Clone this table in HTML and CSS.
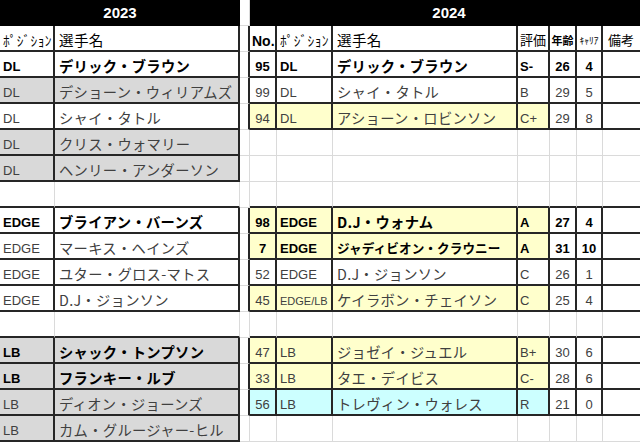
FILE: index.html
```html
<!DOCTYPE html>
<html lang="ja">
<head>
<meta charset="utf-8">
<title>2023 / 2024</title>
<link rel="stylesheet" href="styles.css">
</head>
<body>
<div class="sheet">
  <!-- row 1 -->
  <div class="c title span2">2023</div>
  <div class="c"></div>
  <div class="c title span7">2024</div>
  <!-- row 2 -->
  <div class="c r b hk pos">ﾎﾟｼﾞｼｮﾝ</div>
  <div class="c r b jp hd name">選手名</div>
  <div class="c r"></div>
  <div class="c r b lat bold no">No.</div>
  <div class="c r b hk pos">ﾎﾟｼﾞｼｮﾝ</div>
  <div class="c r b jp hd name">選手名</div>
  <div class="c r b jp hd sm grade">評価</div>
  <div class="c r b jp hd xs bold ctr">年齢</div>
  <div class="c r b hk xxs ctr">ｷｬﾘｱ</div>
  <div class="c r b jp hd sm memo">備考</div>
  <!-- row 3 -->
  <div class="c r b lat bold pos">DL</div>
  <div class="c r b jp bold name">デリック・ブラウン</div>
  <div class="c r"></div>
  <div class="c r b lat bold ctr">95</div>
  <div class="c r b lat bold pos">DL</div>
  <div class="c r b jp bold name">デリック・ブラウン</div>
  <div class="c r b lat bold grade">S-</div>
  <div class="c r b lat bold ctr">26</div>
  <div class="c r b lat bold ctr">4</div>
  <div class="c r b"></div>
  <!-- row 4 -->
  <div class="c r b lat pos gr">DL</div>
  <div class="c r b jp name gr">デショーン・ウィリアムズ</div>
  <div class="c r"></div>
  <div class="c r b lat ctr">99</div>
  <div class="c r b lat pos">DL</div>
  <div class="c r b jp name">シャイ・タトル</div>
  <div class="c r b lat grade">B</div>
  <div class="c r b lat ctr">29</div>
  <div class="c r b lat ctr">5</div>
  <div class="c r b"></div>
  <!-- row 5 -->
  <div class="c r b lat pos">DL</div>
  <div class="c r b jp name">シャイ・タトル</div>
  <div class="c r"></div>
  <div class="c r b lat ctr ye">94</div>
  <div class="c r b lat pos ye">DL</div>
  <div class="c r b jp name ye">アショーン・ロビンソン</div>
  <div class="c r b lat grade ye">C+</div>
  <div class="c r b lat ctr">29</div>
  <div class="c r b lat ctr">8</div>
  <div class="c r b"></div>
  <!-- row 6 -->
  <div class="c r b lat pos gr">DL</div>
  <div class="c r b jp name gr">クリス・ウォマリー</div>
  <div class="c"></div>
  <div class="c"></div><div class="c"></div><div class="c"></div><div class="c"></div><div class="c"></div><div class="c"></div><div class="c"></div>
  <!-- row 7 -->
  <div class="c r b lat pos gr">DL</div>
  <div class="c r b jp name gr">ヘンリー・アンダーソン</div>
  <div class="c"></div>
  <div class="c"></div><div class="c"></div><div class="c"></div><div class="c"></div><div class="c"></div><div class="c"></div><div class="c"></div>
  <!-- row 8 -->
  <div class="c b"></div>
  <div class="c b"></div>
  <div class="c"></div>
  <div class="c b"></div><div class="c b"></div><div class="c b"></div><div class="c b"></div><div class="c b"></div><div class="c b"></div><div class="c b"></div>
  <!-- row 9 -->
  <div class="c r b lat bold pos">EDGE</div>
  <div class="c r b jp bold name">ブライアン・バーンズ</div>
  <div class="c r"></div>
  <div class="c r b lat bold ctr ye">98</div>
  <div class="c r b lat bold pos ye">EDGE</div>
  <div class="c r b jp bold name ye">D.J・ウォナム</div>
  <div class="c r b lat bold grade ye">A</div>
  <div class="c r b lat bold ctr">27</div>
  <div class="c r b lat bold ctr">4</div>
  <div class="c r b"></div>
  <!-- row 10 -->
  <div class="c r b lat pos">EDGE</div>
  <div class="c r b jp name">マーキス・ヘインズ</div>
  <div class="c r"></div>
  <div class="c r b lat bold ctr ye">7</div>
  <div class="c r b lat bold pos ye">EDGE</div>
  <div class="c r b jp bold name small ye">ジャディビオン・クラウニー</div>
  <div class="c r b lat bold grade ye">A</div>
  <div class="c r b lat bold ctr">31</div>
  <div class="c r b lat bold ctr">10</div>
  <div class="c r b"></div>
  <!-- row 11 -->
  <div class="c r b lat pos">EDGE</div>
  <div class="c r b jp name">ユター・グロス-マトス</div>
  <div class="c r"></div>
  <div class="c r b lat ctr">52</div>
  <div class="c r b lat pos">EDGE</div>
  <div class="c r b jp name">D.J・ジョンソン</div>
  <div class="c r b lat grade">C</div>
  <div class="c r b lat ctr">26</div>
  <div class="c r b lat ctr">1</div>
  <div class="c r b"></div>
  <!-- row 12 -->
  <div class="c r b lat pos">EDGE</div>
  <div class="c r b jp name">D.J・ジョンソン</div>
  <div class="c r"></div>
  <div class="c r b lat ctr ye">45</div>
  <div class="c r b lat pos tiny ye">EDGE/LB</div>
  <div class="c r b jp name ye">ケイラボン・チェイソン</div>
  <div class="c r b lat grade ye">C</div>
  <div class="c r b lat ctr">25</div>
  <div class="c r b lat ctr">4</div>
  <div class="c r b"></div>
  <!-- row 13 -->
  <div class="c b"></div>
  <div class="c b"></div>
  <div class="c"></div>
  <div class="c b"></div><div class="c b"></div><div class="c b"></div><div class="c b"></div><div class="c b"></div><div class="c b"></div><div class="c b"></div>
  <!-- row 14 -->
  <div class="c r b lat bold pos gr">LB</div>
  <div class="c r b jp bold name gr">シャック・トンプソン</div>
  <div class="c r"></div>
  <div class="c r b lat ctr ye">47</div>
  <div class="c r b lat pos ye">LB</div>
  <div class="c r b jp name ye">ジョゼイ・ジュエル</div>
  <div class="c r b lat grade ye">B+</div>
  <div class="c r b lat ctr">30</div>
  <div class="c r b lat ctr">6</div>
  <div class="c r b"></div>
  <!-- row 15 -->
  <div class="c r b lat bold pos gr">LB</div>
  <div class="c r b jp bold name gr">フランキー・ルブ</div>
  <div class="c r"></div>
  <div class="c r b lat ctr ye">33</div>
  <div class="c r b lat pos ye">LB</div>
  <div class="c r b jp name ye">タエ・デイビス</div>
  <div class="c r b lat grade ye">C-</div>
  <div class="c r b lat ctr">28</div>
  <div class="c r b lat ctr">6</div>
  <div class="c r b"></div>
  <!-- row 16 -->
  <div class="c r b lat pos gr">LB</div>
  <div class="c r b jp name gr">ディオン・ジョーンズ</div>
  <div class="c r"></div>
  <div class="c r b lat ctr cy">56</div>
  <div class="c r b lat pos cy">LB</div>
  <div class="c r b jp name cy">トレヴィン・ウォレス</div>
  <div class="c r b lat grade cy">R</div>
  <div class="c r b lat ctr">21</div>
  <div class="c r b lat ctr">0</div>
  <div class="c r b"></div>
  <!-- row 17 -->
  <div class="c r b lat pos gr">LB</div>
  <div class="c r b jp name gr">カム・グルージャー-ヒル</div>
  <div class="c"></div>
  <div class="c"></div><div class="c"></div><div class="c"></div><div class="c"></div><div class="c"></div><div class="c"></div><div class="c"></div>
</div>
</body>
</html>
```
FILE: styles.css
```css
html, body {
  margin: 0;
  padding: 0;
  background: #fff;
  overflow: hidden;
}

.sheet {
  display: grid;
  grid-template-columns: 55px 185px 10px 27px 56px 185px 32px 27px 26px 45px;
  grid-auto-rows: 26px;
  width: 648px;
  font-family: "Liberation Sans", Arial, sans-serif;
  color: #404040;
}

.c {
  box-sizing: border-box;
  border-right: 1px solid #dadada;
  border-bottom: 1px solid #dadada;
  white-space: nowrap;
  padding-top: 3px;
  font-size: 13px;
  line-height: 22px;
}

.r { border-right: 2px solid #262626; }
.b { border-bottom: 2px solid #262626; }

.title {
  background: #000;
  color: #fff;
  border: none;
  font-weight: bold;
  font-size: 15px;
  text-align: center;
  padding-top: 2px;
  line-height: 22px;
}
.span2 { grid-column: span 2; }
.span7 { grid-column: span 7; }

.lat {
  font-family: "Liberation Sans", Arial, sans-serif;
  font-size: 13px;
  line-height: 24px;
}
.jp {
  font-family: "Noto Sans CJK JP", sans-serif;
  font-size: 14.3px;
  line-height: 22px;
  letter-spacing: 0.3px;
}
.hk {
  font-family: "Noto Sans CJK JP", sans-serif;
  font-size: 13.5px;
  line-height: 22px;
  color: #000;
  letter-spacing: 0.3px;
}

.hd { color: #000; font-size: 14.6px; }
.sm { font-size: 13px; letter-spacing: 0; }
.xs { font-size: 11px; letter-spacing: 0; }
.xxs { font-size: 9.5px; letter-spacing: 0; }
.small { font-size: 12.6px; letter-spacing: 0.1px; }
.tiny { font-size: 11px; }

.bold { font-weight: bold; color: #000; }

.pos { padding-left: 3px; }
.name { padding-left: 4px; }
.grade { padding-left: 2px; }
.memo { padding-left: 5px; }
.no { padding-left: 2px; font-size: 14px; }
.ctr { text-align: center; }

.gr { background: #d9d9d9; }
.ye { background: #ffffcc; }
.cy { background: #ccffff; }
```
